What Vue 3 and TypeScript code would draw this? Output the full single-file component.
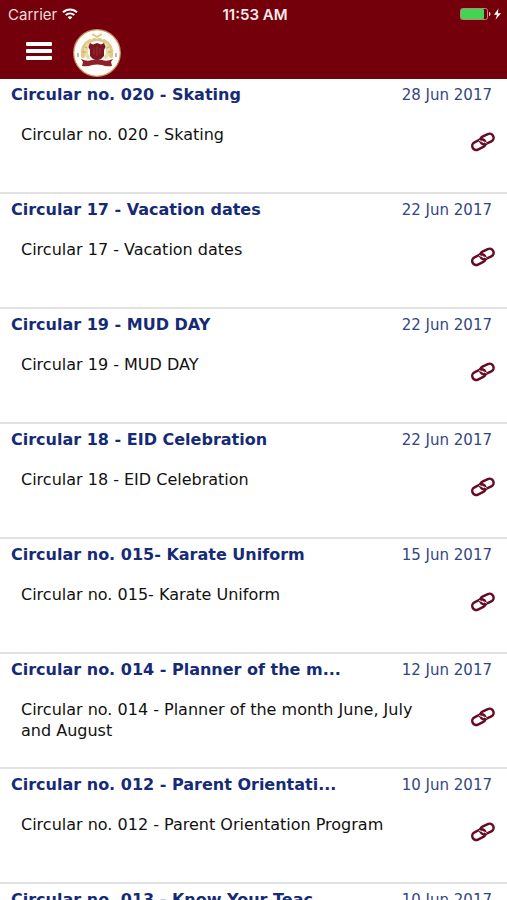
<script setup lang="ts">
interface Circular {
  id: number
  title: string
  body: string
  date: string
}

const circulars: Circular[] = [
  { id: 1, title: 'Circular no. 020 - Skating', body: 'Circular no. 020 - Skating', date: '28 Jun 2017' },
  { id: 2, title: 'Circular 17 - Vacation dates', body: 'Circular 17 - Vacation dates', date: '22 Jun 2017' },
  { id: 3, title: 'Circular 19 - MUD DAY', body: 'Circular 19 - MUD DAY', date: '22 Jun 2017' },
  { id: 4, title: 'Circular 18 - EID Celebration', body: 'Circular 18 - EID Celebration', date: '22 Jun 2017' },
  { id: 5, title: 'Circular no. 015- Karate Uniform', body: 'Circular no. 015- Karate Uniform', date: '15 Jun 2017' },
  { id: 6, title: 'Circular no. 014 - Planner of the m...', body: 'Circular no. 014 - Planner of the month June, July and August', date: '12 Jun 2017' },
  { id: 7, title: 'Circular no. 012 - Parent Orientati...', body: 'Circular no. 012 - Parent Orientation Program', date: '10 Jun 2017' },
  { id: 8, title: 'Circular no. 013 - Know Your Teac...', body: '', date: '10 Jun 2017' },
]
</script>

<template>
  <div class="screen">
    <header class="header">
      <div class="status">
        <div class="carrier">
          <span>Carrier</span>
          <svg width="16" height="12" viewBox="0 0 16 12" fill="none" stroke="#fff" stroke-width="2" aria-hidden="true">
            <path d="M1 4.3C5 .4 11 .4 15 4.3" />
            <path d="M3.7 7.1c2.5-2.3 6.1-2.3 8.6 0" />
            <path d="M8 11.6 5.6 9.2c1.3-1.2 3.5-1.2 4.8 0z" fill="#fff" stroke="none" />
          </svg>
        </div>
        <span class="clock">11:53 AM</span>
        <div class="battery">
          <svg width="42" height="14" viewBox="0 0 42 14" aria-hidden="true">
            <rect x=".5" y="1.5" width="27" height="11" rx="2" fill="none" stroke="#b98784" />
            <rect x="1" y="2" width="23" height="10" rx="1" fill="#43d551" />
            <path d="M29 5c2 .5 2 3.500 0 4z" fill="#e8cfcf" />
            <path d="M38.500 1.500 34 7.700h3l-1.500 5L41 6.300h-3.200z" fill="#fff" />
          </svg>
        </div>
      </div>
      <nav class="toolbar">
        <button class="menu" type="button" aria-label="Menu">
          <svg width="26" height="22" viewBox="0 0 26 22" fill="#fff" aria-hidden="true">
            <rect y="0" width="26" height="4" rx="1" />
            <rect y="7" width="26" height="4" rx="1" />
            <rect y="14" width="26" height="4" rx="1" />
          </svg>
        </button>
        <svg class="crest" width="48" height="48" viewBox="0 0 48 48" role="img" aria-label="School crest">
          <circle cx="24" cy="24" r="23.300" fill="#fffdf8" stroke="#cf8e68" stroke-width="1.200" />
          <g fill="none" stroke="#dfca8b" stroke-linecap="round">
            <path d="M17 12c-6 3-8 8-7 15" stroke-width="4" />
            <path d="M31 12c6 3 8 8 7 15" stroke-width="4" />
            <path d="M15 16c-3 5-3 8 0 12M33 16c3 5 3 8 0 12" stroke="#eadca9" stroke-width="4" />
            <path d="M20 5.500l8 5M28 5.500l-8 5M19 12q5-2 10 0" stroke="#dcc68b" stroke-width="2" />
            <path d="M12 18l2 1M10 23l3 0M36 18l-2 1M38 23l-3 0" stroke="#c3a55b" stroke-width="1" />
          </g>
          <path d="M17 14l3 1.500 4-1.500 4 1.500 3-1.500 1.500 4-1.500 3v6l-3 3-4 1.500-4-1.500-3-3v-6l-1.500-3z" fill="#80141f" />
          <path d="M24 17v10M21 19v6M27 19v6" fill="none" stroke="#963038" />
          <path d="M8 30q6 3 11 1 5-1 10 0 5 2 11-1l-2 3 1 4q-6 1-10-1-5-1-10 0-4 2-10 1l1-4z" fill="#8d2028" />
          <path d="M5 24v4M43 24v4" stroke="#688064" stroke-width="1" />
        </svg>
      </nav>
    </header>
    <main class="list">
      <article v-for="item in circulars" :key="item.id" class="row">
        <div class="heading">
          <h2 class="title">{{ item.title }}</h2>
          <time class="date">{{ item.date }}</time>
        </div>
        <div class="content">
          <p class="body">{{ item.body }}</p>
          <a class="attachment" href="#" :aria-label="`Open attachment of ${item.title}`">
            <svg width="26" height="20" viewBox="0 0 26 20" fill="none" aria-hidden="true">
              <g stroke="#650c24" stroke-width="2.500">
                <rect x="-7" y="-4" width="14" height="8" rx="4" transform="translate(16.900 7) rotate(-26)" />
                <rect x="-7" y="-4" width="14" height="8" rx="4" transform="translate(8.900 12.600) rotate(-26)" />
              </g>
              <path d="M9.300 8.400l2.400 1.300M14.200 9.900l2.400 1.300" stroke="#fff" stroke-width="1" />
            </svg>
          </a>
        </div>
      </article>
    </main>
  </div>
</template>

<style>
body {
  margin: 0;
  background: #fff;
}
</style>

<style scoped>
.screen {
  display: flex;
  flex-direction: column;
  height: 100vh;
  overflow: hidden;
  font-family: "DejaVu Sans", Verdana, sans-serif;
}

.header {
  flex: none;
  background: #73000b;
  color: #fff;
}

.status {
  display: grid;
  grid-template-columns: 1fr auto 1fr;
  align-items: center;
  height: 28px;
  padding: 0 5px 0 8px;
  font-family: Inter, "Liberation Sans", sans-serif;
  font-size: 15px;
}

.carrier {
  display: flex;
  align-items: center;
  gap: 5px;
  color: #f3dcdc;
}

.clock {
  font-weight: 600;
  color: #fbeaea;
}

.battery {
  display: flex;
  justify-content: flex-end;
}

.toolbar {
  display: flex;
  align-items: center;
  gap: 21px;
  box-sizing: border-box;
  height: 51px;
  padding: 0 26px 2px;
}

.menu {
  display: flex;
  padding: 0;
  border: 0;
  background: none;
  cursor: pointer;
}

.crest {
  display: block;
}

.list {
  flex: 1;
  min-height: 0;
  overflow-y: auto;
  scrollbar-width: none;
}

.row {
  box-sizing: border-box;
  min-height: 115px;
  padding: 5px 11px 0;
  border-bottom: 2px solid #e2e2e2;
}

.heading {
  display: flex;
  justify-content: space-between;
  align-items: center;
  padding-right: 4px;
  line-height: 22px;
}

.title {
  margin: 0;
  font-size: 16px;
  font-weight: 700;
  color: #162b76;
  white-space: nowrap;
}

.date {
  font-size: 15px;
  color: #344584;
  white-space: nowrap;
}

.content {
  display: flex;
  align-items: flex-start;
  justify-content: space-between;
  gap: 24px;
  padding: 18px 0 0 10px;
}

.body {
  margin: 0;
  font-size: 16px;
  line-height: 21px;
  color: #111;
}

.attachment {
  flex: none;
  display: block;
  margin-top: 8px;
}

.attachment svg {
  display: block;
}
</style>
